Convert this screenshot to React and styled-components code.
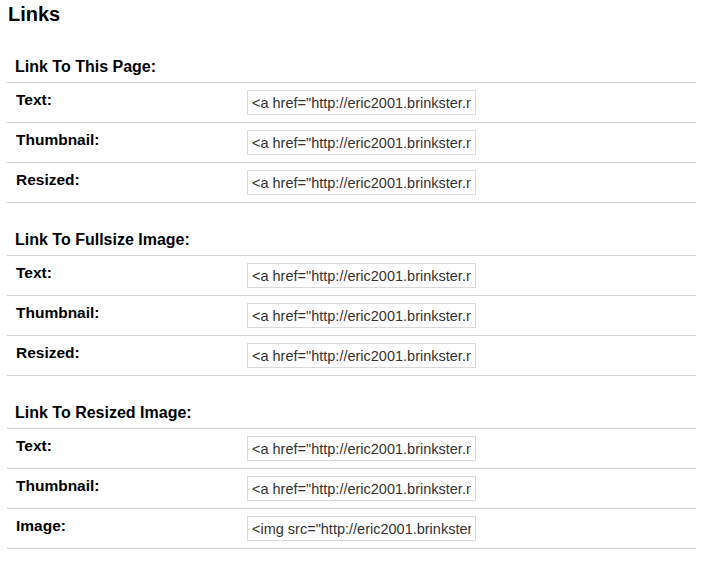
import React from "react";
import styled, { createGlobalStyle } from "styled-components";

const GlobalStyle = createGlobalStyle`
  body {
    margin: 0;
    background: #fff;
    font-family: "Liberation Sans", Arial, sans-serif;
    color: #000;
  }
`;

const Page = styled.div`
  padding: 3px 5px 0 7px;
  width: 689px;
`;

const Title = styled.h2`
  margin: 0 0 32px 1px;
  font-size: 20px;
  line-height: 23px;
  font-weight: bold;
`;

const Groups = styled.div`
  display: flex;
  flex-direction: column;
  gap: 28px;
`;

const Group = styled.div`
  display: flex;
  flex-direction: column;
`;

const GroupHead = styled.div`
  height: 24px;
  padding-left: 8px;
  font-size: 16px;
  line-height: 18px;
  font-weight: bold;
  border-bottom: 1px solid #cfcfcf;
`;

const Row = styled.div`
  display: flex;
  align-items: flex-start;
  height: 32px;
  padding-top: 7px;
  border-bottom: 1px solid #cfcfcf;
`;

const Label = styled.div`
  width: 240px;
  padding: 1px 0 0 9px;
  box-sizing: border-box;
  font-size: 15.5px;
  line-height: 17px;
  font-weight: bold;
`;

const Code = styled.input`
  width: 229px;
  height: 25px;
  box-sizing: border-box;
  margin: 0;
  padding: 0 4px 0 4px;
  border: 1px solid #d9d9d9;
  background: #fff;
  color: #333;
  font-family: "Liberation Sans", Arial, sans-serif;
  font-size: 14.5px;
  outline: none;
`;

const aLink = '<a href="http://eric2001.brinkster.net/gallery/view.php?id=1"></a>';
const imgLink = '<img src="http://eric2001.brinkster.net/gallery/images/1.jpg" />';

const groups = [
  {
    title: "Link To This Page:",
    rows: [
      ["Text:", aLink],
      ["Thumbnail:", aLink],
      ["Resized:", aLink],
    ],
  },
  {
    title: "Link To Fullsize Image:",
    rows: [
      ["Text:", aLink],
      ["Thumbnail:", aLink],
      ["Resized:", aLink],
    ],
  },
  {
    title: "Link To Resized Image:",
    rows: [
      ["Text:", aLink],
      ["Thumbnail:", aLink],
      ["Image:", imgLink],
    ],
  },
];

const App = () => {
  return (
    <>
      <GlobalStyle />
      <Page>
        <Title>Links</Title>
        <Groups>
          {groups.map((g) => (
            <Group key={g.title}>
              <GroupHead>{g.title}</GroupHead>
              {g.rows.map(([label, value]) => (
                <Row key={label}>
                  <Label>{label}</Label>
                  <Code type="text" readOnly value={value} />
                </Row>
              ))}
            </Group>
          ))}
        </Groups>
      </Page>
    </>
  );
};

export default App;
